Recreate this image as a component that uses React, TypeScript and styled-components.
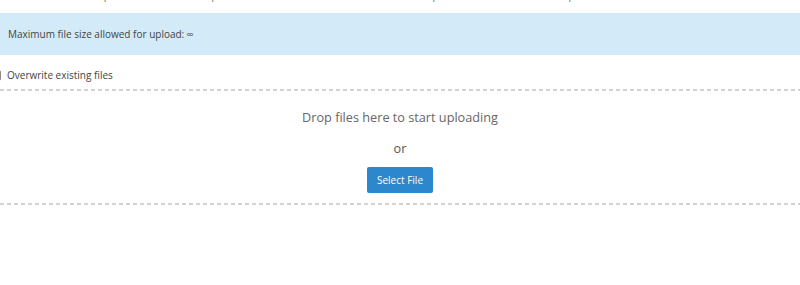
import React from "react";
import styled, { createGlobalStyle } from "styled-components";

const GlobalStyle = createGlobalStyle`
  html, body {
    margin: 0;
    padding: 0;
    background: #ffffff;
  }
  body {
    font-family: "Open Sans", "Liberation Sans", sans-serif;
    color: #555;
  }
  * { box-sizing: border-box; }
`;

const Page = styled.div`
  width: 800px;
  display: flex;
  flex-direction: column;
`;

const Intro = styled.div`
  height: 13px;
  display: flex;
  align-items: flex-start;
  overflow: hidden;
`;

const IntroText = styled.p`
  margin: -12px 0 0 0;
  padding-left: 1px;
  font-size: 10px;
  line-height: 14px;
  white-space: nowrap;
  color: #666;
`;

const InfoBox = styled.div`
  height: 42px;
  display: flex;
  align-items: center;
  padding: 0 8px;
  background: #d3ebf8;
  font-size: 10px;
  color: #444;
`;

const CheckRow = styled.label`
  margin-top: 10px;
  height: 20px;
  display: flex;
  align-items: center;
  gap: 6px;
  font-size: 10px;
  color: #444;
`;

const Check = styled.input`
  appearance: none;
  margin: 0 0 0 -10px;
  width: 11px;
  height: 11px;
  border: 1px solid #8a8a8a;
  border-radius: 2px;
  background: #fff;
`;

const DropZone = styled.div`
  margin-top: 4px;
  padding: 19px 0 12px;
  display: flex;
  flex-direction: column;
  align-items: center;
  background-image:
    repeating-linear-gradient(90deg, #d2d2d2 0 4px, transparent 4px 7px),
    repeating-linear-gradient(90deg, #d2d2d2 0 4px, transparent 4px 7px);
  background-size: 100% 2px, 100% 2px;
  background-position: 0 0, 0 100%;
  background-repeat: no-repeat;
`;

const DropText = styled.div`
  font-size: 12.7px;
  line-height: 18px;
  color: #666;
`;

const OrText = styled.div`
  margin-top: 13px;
  font-size: 12.7px;
  line-height: 18px;
  color: #555;
`;

const PrimaryButton = styled.button`
  margin-top: 10px;
  height: 26px;
  padding: 0 10px;
  border: none;
  border-radius: 2px;
  background: #2c87cd;
  color: #ffffff;
  font-family: "Open Sans", "Liberation Sans", sans-serif;
  font-size: 10px;
  cursor: pointer;
`;

export default function App() {
  return (
    <>
      <GlobalStyle />
      <Page>
        <Intro>
          <IntroText>
            Files selected will be uploaded to the current path. Note that files with the same name are kept. Check the box below to replace them.
          </IntroText>
        </Intro>
        <InfoBox>Maximum file size allowed for upload: ∞</InfoBox>
        <CheckRow>
          <Check type="checkbox" />
          Overwrite existing files
        </CheckRow>
        <DropZone>
          <DropText>Drop files here to start uploading</DropText>
          <OrText>or</OrText>
          <PrimaryButton>Select File</PrimaryButton>
        </DropZone>
      </Page>
    </>
  );
}
